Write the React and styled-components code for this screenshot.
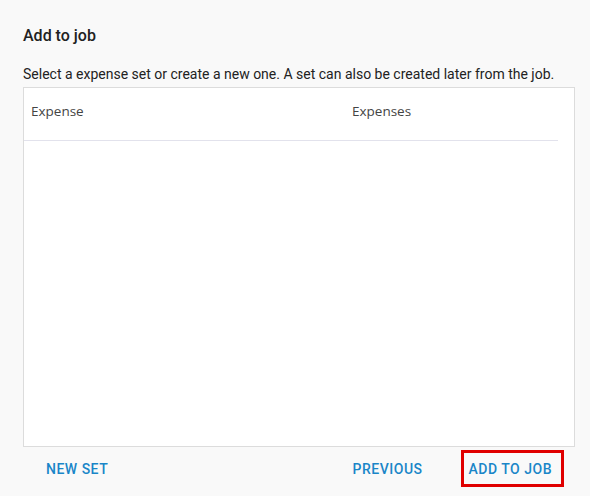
import React from 'react';
import styled, { createGlobalStyle } from 'styled-components';

const GlobalStyle = createGlobalStyle`
  body {
    margin: 0;
    background: #f9f9f9;
    font-family: Roboto, "Liberation Sans", sans-serif;
  }
`;

const Dialog = styled.div`
  width: 590px;
  height: 496px;
  box-sizing: border-box;
  padding: 26px 16px 0 23px;
  display: flex;
  flex-direction: column;
`;

const Title = styled.h2`
  margin: 0;
  font-size: 16px;
  line-height: 20px;
  font-weight: 500;
  color: #212121;
`;

const Hint = styled.p`
  margin: 18px 0 3px;
  font-size: 14px;
  line-height: 20px;
  color: #222;
`;

const TableBox = styled.div`
  width: 552px;
  height: 360px;
  box-sizing: border-box;
  border: 1px solid #dcdcdc;
  background: #fff;
  padding-right: 16px;
`;

const HeaderRow = styled.div`
  display: grid;
  grid-template-columns: 321px 1fr;
  height: 53px;
  box-sizing: border-box;
  padding-bottom: 7px;
  align-items: center;
  border-bottom: 1px solid #e2e2ec;
`;

const HeaderCell = styled.div`
  padding-left: 7px;
  font-family: "Open Sans", "Noto Sans", sans-serif;
  font-size: 13.5px;
  color: #444;
`;

const Footer = styled.div`
  display: flex;
  align-items: center;
  margin-top: 3px;
  padding: 0 11px 0 15px;
  width: 552px;
  box-sizing: border-box;
`;

const Spacer = styled.div`
  flex: 1;
`;

const ActionButton = styled.button`
  height: 37px;
  box-sizing: border-box;
  padding: ${(p) => (p.$highlighted ? '0 9px 0 5px' : '0 5px')};
  margin-left: ${(p) => (p.$first ? '0' : '30px')};
  border: 3px solid ${(p) => (p.$highlighted ? '#e00000' : 'transparent')};
  background: none;
  font-family: Roboto, "Liberation Sans", sans-serif;
  font-size: 14px;
  font-weight: 500;
  letter-spacing: 0.5px;
  text-transform: uppercase;
  color: #1a86c8;
  cursor: pointer;
`;

const App = () => {
  return (
    <>
      <GlobalStyle />
      <Dialog>
        <Title>Add to job</Title>
        <Hint>
          Select a expense set or create a new one. A set can also be created later from the job.
        </Hint>
        <TableBox>
          <HeaderRow>
            <HeaderCell>Expense</HeaderCell>
            <HeaderCell>Expenses</HeaderCell>
          </HeaderRow>
        </TableBox>
        <Footer>
          <ActionButton $first>New set</ActionButton>
          <Spacer />
          <ActionButton $first>Previous</ActionButton>
          <ActionButton $highlighted>Add to job</ActionButton>
        </Footer>
      </Dialog>
    </>
  );
};

export default App;
